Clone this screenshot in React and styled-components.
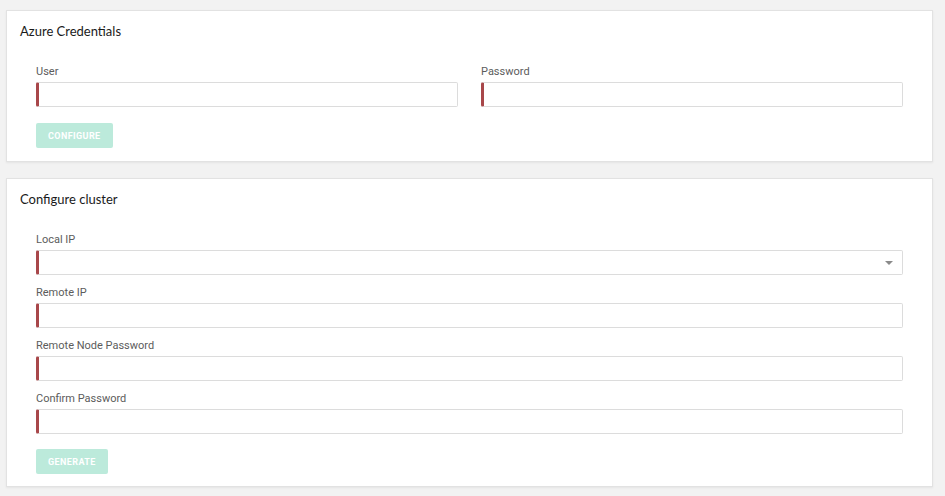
import React from "react";
import styled, { createGlobalStyle } from "styled-components";

const Global = createGlobalStyle`
  html, body { margin: 0; padding: 0; background: #f2f2f2; }
  body { font-family: Roboto, "Liberation Sans", sans-serif; }
  * { box-sizing: border-box; }
`;

const Page = styled.div`
  display: flex;
  flex-direction: column;
  gap: 16px;
  padding: 10px 12px 8px 6px;
`;

const Card = styled.section`
  background: #fff;
  border: 1px solid #e2e2e2;
  box-shadow: 0 1px 2px rgba(0, 0, 0, 0.06);
  padding: 12px 0 ${(p) => p.$bottom}px;
`;

const Title = styled.h2`
  margin: 0 0 26px;
  padding: 0 13px;
  font-family: Lato, "Noto Sans", sans-serif;
  font-weight: 400;
  font-size: 13px;
  line-height: 16px;
  color: #1a1a1a;
`;

const Body = styled.div`
  padding: 0 29px;
  display: flex;
  flex-direction: column;
`;

const Row = styled.div`
  display: grid;
  grid-template-columns: 1fr 1fr;
  column-gap: 23px;
  margin-bottom: ${(p) => p.$mb}px;
`;

const Field = styled.div`
  display: flex;
  flex-direction: column;
  margin-bottom: ${(p) => p.$mb || 0}px;
`;

const Label = styled.label`
  font-size: 11px;
  line-height: 14px;
  color: #5c5c5c;
  margin-bottom: 3px;
`;

const InputBox = styled.div`
  position: relative;
  height: 25px;
  border: 1px solid #dcdcdc;
  border-left: 3px solid #a8474a;
  border-radius: 2px;
  background: #fff;
`;

const Caret = styled.span`
  position: absolute;
  right: 9px;
  top: 10px;
  width: 0;
  height: 0;
  border-left: 4px solid transparent;
  border-right: 4px solid transparent;
  border-top: 4px solid #8a8a8a;
`;

const Button = styled.button`
  align-self: flex-start;
  height: 25px;
  padding: 0 12px;
  border: none;
  border-radius: 2px;
  background: #bceadb;
  color: #fff;
  font-family: Roboto, "Liberation Sans", sans-serif;
  font-weight: 700;
  font-size: 9px;
  letter-spacing: 0.4px;
  text-transform: uppercase;
  margin-top: ${(p) => p.$mt || 0}px;
`;

const Input = ({ label, mb, select }) => (
  <Field $mb={mb}>
    <Label>{label}</Label>
    <InputBox>{select && <Caret />}</InputBox>
  </Field>
);

export default function App() {
  return (
    <>
      <Global />
      <Page>
        <Card $bottom={13}>
          <Title>Azure Credentials</Title>
          <Body>
            <Row $mb={16}>
              <Input label="User" />
              <Input label="Password" />
            </Row>
            <Button>Configure</Button>
          </Body>
        </Card>
        <Card $bottom={12}>
          <Title>Configure cluster</Title>
          <Body>
            <Input label="Local IP" mb={11} select />
            <Input label="Remote IP" mb={11} />
            <Input label="Remote Node Password" mb={11} />
            <Input label="Confirm Password" mb={11} />
            <Button $mt={4}>Generate</Button>
          </Body>
        </Card>
      </Page>
    </>
  );
}
